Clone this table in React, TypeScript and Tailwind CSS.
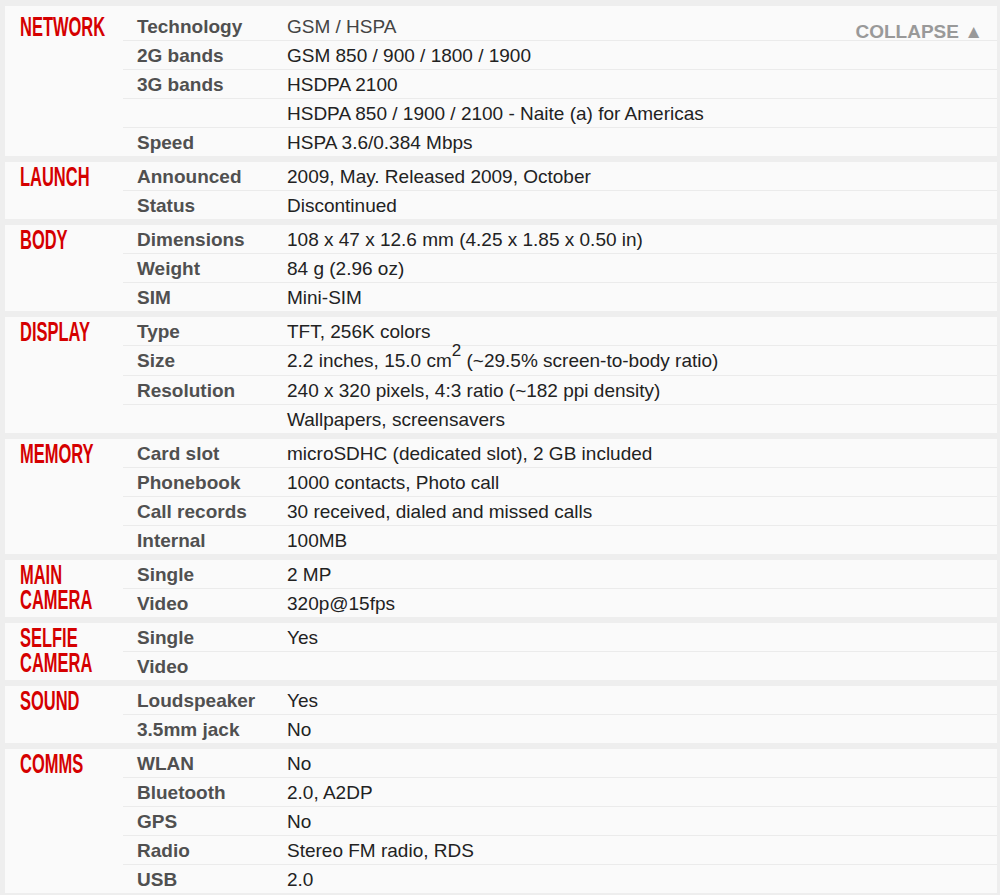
import type { ReactNode } from "react";

type ISpecRow = {
	name: string;
	value: ReactNode;
	tall?: boolean;
};

type ISpecSection = {
	title: string[];
	rows: ISpecRow[];
};

const SPECS: ISpecSection[] = [
	{
		title: ["NETWORK"],
		rows: [
			{ name: "Technology", value: "GSM / HSPA" },
			{ name: "2G bands", value: "GSM 850 / 900 / 1800 / 1900" },
			{ name: "3G bands", value: "HSDPA 2100" },
			{ name: "", value: "HSDPA 850 / 1900 / 2100 - Naite (a) for Americas" },
			{ name: "Speed", value: "HSPA 3.6/0.384 Mbps" },
		],
	},
	{
		title: ["LAUNCH"],
		rows: [
			{ name: "Announced", value: "2009, May. Released 2009, October" },
			{ name: "Status", value: "Discontinued" },
		],
	},
	{
		title: ["BODY"],
		rows: [
			{ name: "Dimensions", value: "108 x 47 x 12.6 mm (4.25 x 1.85 x 0.50 in)" },
			{ name: "Weight", value: "84 g (2.96 oz)" },
			{ name: "SIM", value: "Mini-SIM" },
		],
	},
	{
		title: ["DISPLAY"],
		rows: [
			{ name: "Type", value: "TFT, 256K colors" },
			{
				name: "Size",
				tall: true,
				value: (
					<span>
						2.2 inches, 15.0 cm<sup className="text-[17px] -top-[0.65em]">2</sup>{" "}
						(~29.5% screen-to-body ratio)
					</span>
				),
			},
			{ name: "Resolution", value: "240 x 320 pixels, 4:3 ratio (~182 ppi density)" },
			{ name: "", value: "Wallpapers, screensavers" },
		],
	},
	{
		title: ["MEMORY"],
		rows: [
			{ name: "Card slot", value: "microSDHC (dedicated slot), 2 GB included" },
			{ name: "Phonebook", value: "1000 contacts, Photo call" },
			{ name: "Call records", value: "30 received, dialed and missed calls" },
			{ name: "Internal", value: "100MB" },
		],
	},
	{
		title: ["MAIN", "CAMERA"],
		rows: [
			{ name: "Single", value: "2 MP" },
			{ name: "Video", value: "320p@15fps" },
		],
	},
	{
		title: ["SELFIE", "CAMERA"],
		rows: [
			{ name: "Single", value: "Yes" },
			{ name: "Video", value: "" },
		],
	},
	{
		title: ["SOUND"],
		rows: [
			{ name: "Loudspeaker", value: "Yes" },
			{ name: "3.5mm jack", value: "No" },
		],
	},
	{
		title: ["COMMS"],
		rows: [
			{ name: "WLAN", value: "No" },
			{ name: "Bluetooth", value: "2.0, A2DP" },
			{ name: "GPS", value: "No" },
			{ name: "Radio", value: "Stereo FM radio, RDS" },
			{ name: "USB", value: "2.0" },
		],
	},
];

function App() {
	return (
		<div
			className="h-screen overflow-hidden w-full bg-[#eeeeee] pt-[6px] pl-[5px] pr-[3px] flex flex-col gap-[6px]"
			style={{ fontFamily: '"Liberation Sans", Arial, sans-serif' }}
		>
			{SPECS.map((section, sIdx) => (
				<div
					key={section.title.join(" ")}
					className={`flex shrink-0 bg-[#fafafa] ${sIdx === 0 ? "pt-[6px]" : ""}`}
				>
					<div className="w-[118px] shrink-0 pl-[15px] pt-[3px]">
						{section.title.map((line) => (
							<div
								key={line}
								className="origin-left scale-x-[0.61] whitespace-nowrap text-[27px] leading-[25px] font-bold text-[#d50000]"
							>
								{line}
							</div>
						))}
					</div>
					<div className="flex-1 flex flex-col">
						{section.rows.map((row, rIdx) => (
							<div
								key={rIdx}
								className={`flex items-center pt-[2px] text-[19px] ${
									rIdx === 0
										? "h-[28px]"
										: row.tall
											? "h-[30px] border-t border-[#ebebeb]"
											: "h-[29px] border-t border-[#ebebeb]"
								}`}
							>
								<div className="w-[150px] shrink-0 pl-[14px] font-bold text-[#505050] whitespace-nowrap">
									{row.name}
								</div>
								<div
									className={`flex-1 self-stretch flex items-center pl-[14px] whitespace-nowrap ${
										sIdx === 0 && rIdx === 0 ? "text-[#444]" : "text-[#222]"
									}`}
								>
									{row.value}
									{sIdx === 0 && rIdx === 0 ? (
										<span className="ml-auto self-end translate-y-[2px] pr-[14px] text-[19px] leading-[20px] font-bold text-[#999]">
											COLLAPSE ▲
										</span>
									) : null}
								</div>
							</div>
						))}
					</div>
				</div>
			))}
		</div>
	);
}

export default App;
